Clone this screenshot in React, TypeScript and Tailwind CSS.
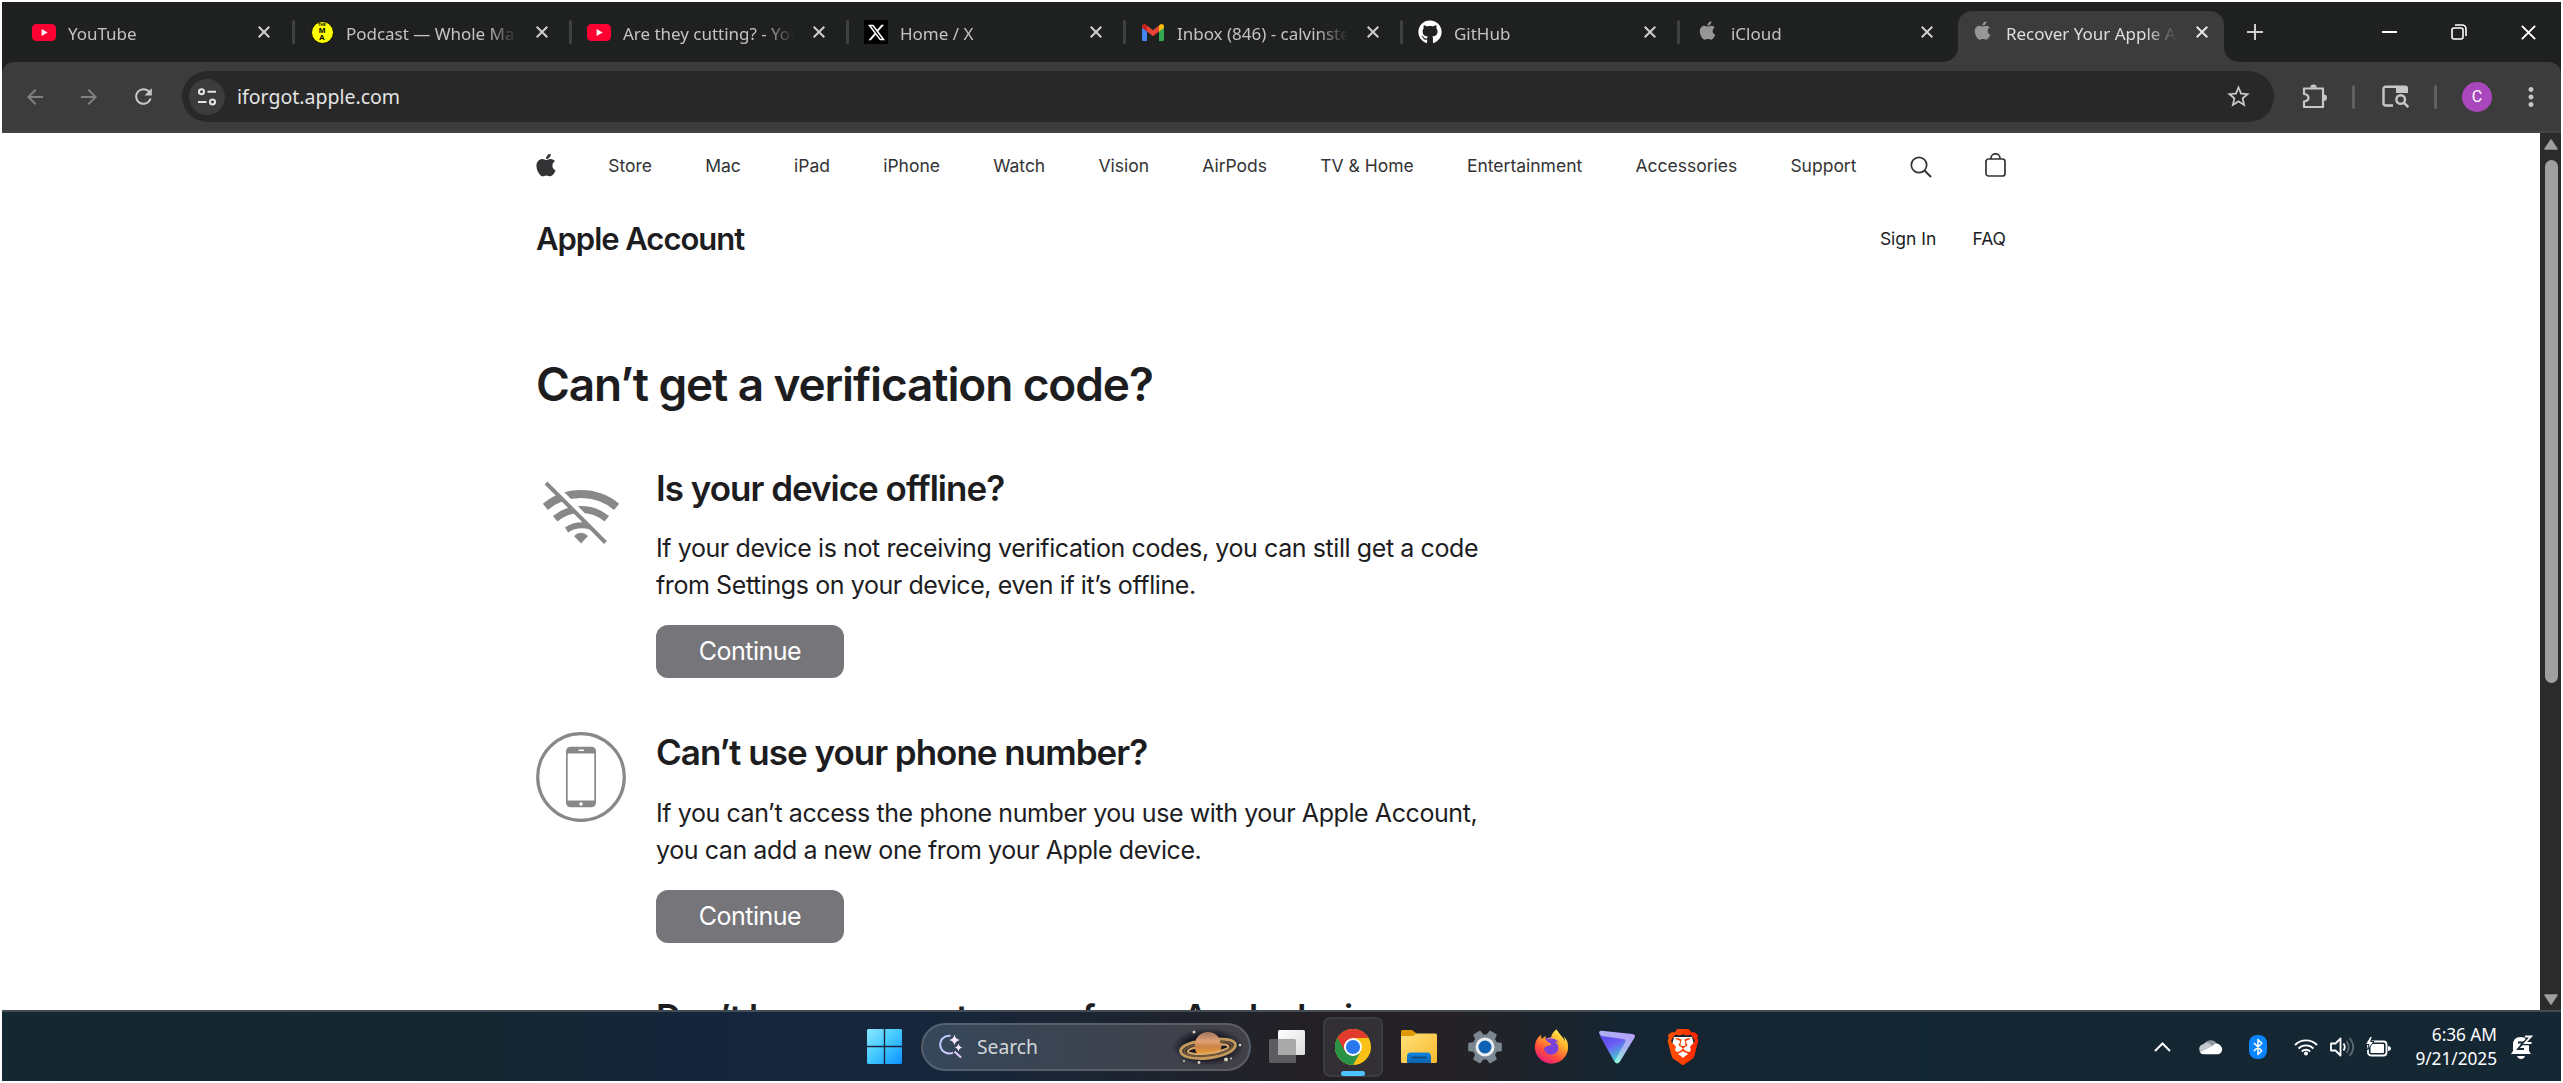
import type { ReactNode } from "react";
import { FaApple, FaFirefoxBrowser, FaGithub, FaXTwitter } from "react-icons/fa6";
import { SiBrave } from "react-icons/si";
import { MdArrowBack, MdArrowForward, MdMoreVert, MdRefresh, MdSettings, MdStarOutline } from "react-icons/md";
import { Bluetooth } from "lucide-react";

function YouTubeIcon() {
  return (
    <svg width="24" height="17" viewBox="0 0 24 17">
      <rect width="24" height="17" rx="4.5" fill="#ff0033" />
      <path d="M9.6 5.1v6.8l6-3.4z" fill="#fff" />
    </svg>
  );
}

function PodcastIcon() {
  return (
    <span className="flex size-[23px] flex-col items-center justify-center rounded-full border border-black bg-[#ffff00] font-['Liberation_Sans'] font-bold leading-none text-black">
      <span className="text-[4px] leading-[4px]">THE</span>
      <span className="text-[8px] leading-[7px]">M</span>
      <span className="text-[8px] leading-[8px]">A</span>
    </span>
  );
}

function GmailIcon() {
  return (
    <svg width="22" height="17" viewBox="0 0 22 17">
      <path d="M0 2.5V15.500Q0 17 1.500 17H5V6.500L0 2.500z" fill="#4285f4" />
      <path d="M22 2.500V15.500Q22 17 20.500 17H17V6.500L22 2.500z" fill="#34a853" />
      <path d="M5 1.500L11 6.200 17 1.500V7.500L11 12.200 5 7.500z" fill="#ea4335" />
      <path d="M0 2.500C0 .3 2.400-.8 4.200.800L5 1.500V7.500L0 3.700z" fill="#c5221f" />
      <path d="M22 2.500C22 .3 19.600-.8 17.800.800L17 1.500V7.500L22 3.700z" fill="#fbbc04" />
    </svg>
  );
}

const tabs: { title: string; icon: ReactNode; active?: boolean }[] = [
  { title: "YouTube", icon: <YouTubeIcon /> },
  { title: "Podcast — Whole Mars", icon: <PodcastIcon /> },
  { title: "Are they cutting? - YouTube", icon: <YouTubeIcon /> },
  { title: "Home / X", icon: <span className="flex size-6 items-center justify-center bg-black text-white"><FaXTwitter size={19} /></span> },
  { title: "Inbox (846) - calvinstewart", icon: <GmailIcon /> },
  { title: "GitHub", icon: <FaGithub size={24} className="text-white" /> },
  { title: "iCloud", icon: <FaApple size={21} className="-mt-1 text-[#969696]" /> },
  { title: "Recover Your Apple Account", icon: <FaApple size={21} className="-mt-1 text-[#969696]" />, active: true },
];

function Cross({ size, color, width }: { size: number; color: string; width: number }) {
  return (
    <svg width={size} height={size} viewBox="0 0 12 12" stroke={color} strokeWidth={width} fill="none">
      <path d="M.7.7l10.600 10.600M11.300.7L.7 11.300" />
    </svg>
  );
}

function TabStrip() {
  return (
    <div className="flex h-[60px] items-center bg-[#1f2120] pl-[14px] font-['Noto_Sans',sans-serif]">
      {tabs.map((tab, i) => (
        <div key={tab.title} className={"relative flex h-[60px] shrink-0 items-center pl-4 " + (i === 0 ? "w-[278px]" : i === 6 ? "w-[275px]" : "w-[277px]")}>
          {tab.active && (
            <>
              <div className="absolute bottom-0 left-[4px] right-[7px] top-[9px] rounded-t-[14px] bg-[#3c3c3c]" />
              <div className="absolute bottom-0 left-[-11px] size-[15px] bg-[#3c3c3c]"><div className="size-full rounded-br-[15px] bg-[#1f2120]" /></div>
              <div className="absolute bottom-0 right-[-8px] size-[15px] bg-[#3c3c3c]"><div className="size-full rounded-bl-[15px] bg-[#1f2120]" /></div>
            </>
          )}
          <span className="relative flex w-6 items-center justify-center">{tab.icon}</span>
          <span
            className={
              "relative ml-3 w-[171px] overflow-hidden whitespace-nowrap pt-[3px] text-[17px] tracking-[-0.02px] [mask-image:linear-gradient(to_right,black_82%,transparent_100%)] " +
              (tab.active ? "text-[#dedede]" : "text-[#c3c3c3]")
            }
          >
            {tab.title}
          </span>
          <span className="relative ml-[19px]"><Cross size={12} color={tab.active ? "#e8e8e8" : "#cfcfcf"} width={2} /></span>
          {i < 6 && <span className="absolute right-[-1px] top-[18px] h-6 w-[3px] rounded bg-[#404141]" />}
        </div>
      ))}
      <svg className="ml-[16px]" width="16" height="16" viewBox="0 0 16 16" stroke="#cfcfcf" strokeWidth="2"><path d="M8 0v16M0 8h16" /></svg>
      <div className="ml-auto flex items-center gap-[54px] pr-[25px] text-white">
        <svg width="15" height="2"><rect width="15" height="2" fill="#fff" /></svg>
        <svg width="16" height="16" viewBox="0 0 16 16" fill="none" stroke="#fff" strokeWidth="1.600">
          <rect x="1" y="4" width="11" height="11" rx="2" />
          <path d="M4 1h7a4 4 0 0 1 4 4v7" />
        </svg>
        <Cross size={15} color="#fff" width={1.5} />
      </div>
    </div>
  );
}

function Toolbar() {
  return (
    <div className="bg-[#1f2120]">
      <div className="flex h-[71px] items-center rounded-t-[12px] border-b-2 border-[#464346] bg-[#3c3c3c] pl-[21px] text-[#c7c7c7]">
        <MdArrowBack size={24} className="text-[#808080]" />
        <MdArrowForward size={24} className="ml-[30px] text-[#808080]" />
        <MdRefresh size={25} className="ml-[30px]" />
        <div className="ml-[26px] flex h-[51px] w-[2092px] items-center rounded-full bg-[#282828] pl-[7px] pr-[22px]">
          <span className="flex size-9 items-center justify-center rounded-full bg-[#3c3c3c]">
            <svg width="18" height="18" viewBox="0 0 18 18" fill="none" stroke="#e3e3e3" strokeWidth="2.100">
              <circle cx="3.500" cy="3.800" r="2.500" /><path d="M9.500 3.800H18M0 14h8.500" /><circle cx="14.500" cy="14" r="2.500" />
            </svg>
          </span>
          <span className="ml-[12px] font-['Noto_Sans',sans-serif] text-[19.500px] text-[#e3e3e3]">iforgot.apple.com</span>
          <MdStarOutline size={27} className="ml-auto" />
        </div>
        <svg className="ml-[28px]" width="26" height="25" viewBox="0 0 26 25" fill="none" stroke="#c7c7c7" strokeWidth="2.200" strokeLinejoin="round">
          <path d="M2 4.500h19v18.500H2v-5.500c3.400-.3 4.500-1.700 4.500-3.700S5.400 10.400 2 10z" />
          <path d="M8.300 3.800a3.200 3.300 0 0 1 6.400 0zM21.800 10.500a3.200 3.200 0 0 1 0 6.400z" fill="#c7c7c7" stroke="none" />
        </svg>
        <span className="ml-[24px] h-6 w-[3px] rounded bg-[#5f5f5f]" />
        <svg className="ml-[27px]" width="27" height="23" viewBox="0 0 27 23" fill="none" stroke="#c7c7c7" strokeWidth="2.400">
          <path d="M11 20.500H3.500a2 2 0 0 1-2-2V3.700a2 2 0 0 1 2-2H15" />
          <path d="M14 .5h9.500A2.500 2.500 0 0 1 26 3v5H14z" fill="#c7c7c7" stroke="none" />
          <circle cx="18.700" cy="14.500" r="4.300" /><path d="M21.800 17.600l4.500 4.500" />
        </svg>
        <span className="ml-[25px] h-6 w-[3px] rounded bg-[#5f5f5f]" />
        <span className="ml-[25px] flex size-[30px] items-center justify-center rounded-full bg-[#ab47bc] font-['Roboto'] text-[16px] text-white">C</span>
        <MdMoreVert size={30} className="ml-6" />
      </div>
    </div>
  );
}

const navItems = ["Store", "Mac", "iPad", "iPhone", "Watch", "Vision", "AirPods", "TV & Home", "Entertainment", "Accessories", "Support"];

function SiteNav() {
  return (
    <nav className="flex h-[67px] w-[1470px] items-center justify-between text-[17.500px] text-[#333336]">
      <FaApple size={26} className="-mx-[3.500px] -mt-1" />
      {navItems.map((item) => <a key={item}>{item}</a>)}
      <svg width="22" height="22" viewBox="0 0 22 22" fill="none" stroke="#333336" strokeWidth="1.700">
        <circle cx="9" cy="9" r="7.700" /><path d="M14.500 14.500l6.500 6.500" strokeWidth="2" />
      </svg>
      <svg className="-mt-1" width="21" height="24" viewBox="0 0 21 24" fill="none" stroke="#333336" strokeWidth="1.700">
        <rect x="1" y="6" width="19" height="17" rx="2.500" /><path d="M6 6V5a4.500 4.200 0 0 1 9 0v1" />
      </svg>
    </nav>
  );
}

function OfflineIcon() {
  return (
    <svg width="90" height="71" viewBox="536 477 90 71" fill="none" stroke="#888888">
      <path d="M545.4 506.800A56 56 0 0 1 616.600 506.800" strokeWidth="8" />
      <path d="M555.200 518.700A40.500 40.500 0 0 1 606.800 518.700" strokeWidth="7" />
      <path d="M566.500 529.900A27 27 0 0 1 597 529.900" strokeWidth="6" />
      <path d="M574 536q7-6.500 14 0l-7 7.500z" fill="#888888" stroke="none" />
      <path d="M549.500 482l58 59.500" stroke="#fff" strokeWidth="7" />
      <path d="M546 483l59.500 59.500" strokeWidth="4" />
    </svg>
  );
}

function PhoneIcon() {
  return (
    <svg width="90" height="90" viewBox="536 732 90 90">
      <circle cx="581" cy="777" r="43.300" fill="none" stroke="#888888" strokeWidth="3.200" />
      <rect x="566" y="746.700" width="30" height="60.600" rx="4.500" fill="#888888" />
      <rect x="567.700" y="753.500" width="26.600" height="47" fill="#fff" />
      <rect x="578.500" y="749.600" width="5.500" height="1.400" rx=".7" fill="#fff" />
      <circle cx="581" cy="804" r="1.700" fill="#fff" />
    </svg>
  );
}

function ContinueButton() {
  return <button className="mt-[22px] block h-[53px] w-[188px] rounded-[12px] bg-[#76757a] text-[25px] tracking-[-0.500px] text-white">Continue</button>;
}

function PageBody() {
  return (
    <main className="h-full flex-1 overflow-hidden bg-white pl-[534px] font-['Inter',sans-serif] text-[#1d1d1f]">
      <SiteNav />
      <div className="flex h-[78px] w-[1470px] items-center justify-between">
        <h2 className="text-[31px] font-semibold tracking-[-1.030px]">Apple Account</h2>
        <div className="flex gap-[36px] text-[17.500px]"><a>Sign In</a><a>FAQ</a></div>
      </div>
      <h1 className="mt-[78px] text-[46px] font-semibold leading-[56px] tracking-[-1.130px]">Can’t get a verification code?</h1>
      <section className="mt-[55px] flex">
        <div className="w-[120px] pt-[10px]"><OfflineIcon /></div>
        <div>
          <h3 className="text-[35px] font-semibold leading-[42px] tracking-[-1px]">Is your device offline?</h3>
          <p className="mt-[21px] whitespace-nowrap text-[25px] leading-[37px] tracking-[-0.410px]">
            If your device is not receiving verification codes, you can still get a code<br />from Settings on your device, even if it’s offline.
          </p>
          <div className="-mt-[1px]"><ContinueButton /></div>
        </div>
      </section>
      <section className="mt-[53px] flex">
        <div className="w-[120px] pt-[1px]"><PhoneIcon /></div>
        <div>
          <h3 className="text-[35px] font-semibold leading-[42px] tracking-[-1px]">Can’t use your phone number?</h3>
          <p className="mt-[22px] whitespace-nowrap text-[25px] leading-[37px] tracking-[-0.420px]">
            If you can’t access the phone number you use with your Apple Account,<br />you can add a new one from your Apple device.
          </p>
          <div className="-mt-[1px]"><ContinueButton /></div>
        </div>
      </section>
      <section className="mt-[53px] pl-[120px]">
        <h3 className="whitespace-nowrap text-[35px] font-semibold leading-[42px] tracking-[-1px]">Don’t have access to any of your Apple devices</h3>
      </section>
    </main>
  );
}

function Scrollbar() {
  return (
    <div className="flex h-full w-[21px] flex-col items-center bg-[#2b2b2b] pl-[1px] pt-[6px]">
      <svg width="14" height="11" viewBox="0 0 14 11"><path d="M7 1L13 10H1z" fill="#9f9f9f" stroke="#9f9f9f" strokeWidth="1.500" strokeLinejoin="round" /></svg>
      <div className="mt-[10px] h-[523px] w-[13px] rounded-full bg-[#9f9f9f]" />
      <svg className="mb-[5px] mt-auto" width="14" height="11" viewBox="0 0 14 11"><path d="M7 10L13 1H1z" fill="#9f9f9f" stroke="#9f9f9f" strokeWidth="1.500" strokeLinejoin="round" /></svg>
    </div>
  );
}

function StartIcon() {
  return (
    <svg width="35" height="35" viewBox="0 0 35 35">
      <defs><linearGradient id="win" x1="0" y1="0" x2="35" y2="35" gradientUnits="userSpaceOnUse"><stop stopColor="#8be4ff" /><stop offset=".45" stopColor="#48ccff" /><stop offset="1" stopColor="#0a92ff" /></linearGradient></defs>
      <path d="M1 0h15.800v16.800H0V1zM18.200 0H34l1 1v15.800H18.200zM0 18.200h16.800V35H1l-1-1zM18.200 18.200H35V34l-1 1H18.200z" fill="url(#win)" />
    </svg>
  );
}

function SearchBox() {
  return (
    <div className="flex h-12 w-[330px] items-center rounded-full border-2 border-white/15 bg-linear-to-r from-[#35475a] to-[#424047] pl-[15px] pr-[5px]">
      <svg width="25" height="25" viewBox="0 0 25 25" fill="none">
        <defs><linearGradient id="mag" x1="0" y1="0" x2="25" y2="25" gradientUnits="userSpaceOnUse"><stop stopColor="#a9ccff" /><stop offset="1" stopColor="#f3ccff" /></linearGradient></defs>
        <path d="M12.500 1.800A8.900 8.900 0 1 0 15 18.600M16.500 17.500l6.500 6" stroke="url(#mag)" strokeWidth="2" />
        <path d="M16.500.5q.9 4.600 5.200 5.400-4.300.9-5.200 5.400-.9-4.500-5.200-5.400 4.300-.8 5.200-5.400zM20.500 9.500q.7 3.300 3.900 4-3.200.7-3.900 4-.7-3.300-3.900-4 3.200-.7 3.900-4z" fill="#fbe9ff" />
      </svg>
      <span className="ml-[14px] pt-[1px] font-['Noto_Sans',sans-serif] text-[19.300px] text-[#d3d6da]">Search</span>
      <svg className="ml-auto" width="72" height="40" viewBox="0 0 72 40">
        <defs>
          <radialGradient id="sky"><stop offset=".6" stopColor="#141523" /><stop offset="1" stopColor="#141523" stopOpacity="0" /></radialGradient>
          <linearGradient id="planet" x1="0" y1="0" x2="0" y2="1"><stop stopColor="#a5755e" /><stop offset=".35" stopColor="#dfa172" /><stop offset=".55" stopColor="#c98446" /><stop offset=".8" stopColor="#ef9a35" /><stop offset="1" stopColor="#c97b3d" /></linearGradient>
        </defs>
        <ellipse cx="36" cy="20" rx="36" ry="19" fill="url(#sky)" />
        <circle cx="36" cy="18.500" r="13.500" fill="url(#planet)" />
        <g transform="rotate(-7 36 21)" fill="none">
          <path d="M24 13.500C12 15 8.500 18 8.500 21c0 5.500 12 10 27.500 10s27.500-4.500 27.500-10c0-3.500-4-6-15.500-7.500" stroke="#c39a5c" strokeWidth="3" />
          <path d="M23.500 16.500C16 17.500 12 19 12 21.500c0 3.700 10 7 24 7s24-3.300 24-7c0-2.500-4-4.200-11.500-5" stroke="#6f563a" strokeWidth="2.200" />
          <path d="M23 19c-5 .8-7.500 1.500-7.500 3 0 2.200 8 4.300 20.500 4.300s20.500-2.300 20.500-4.300c0-1.500-3-2.400-7.500-3" stroke="#d7a86a" strokeWidth="2.200" />
        </g>
        <g fill="#d9d0bd"><circle cx="22" cy="5" r="1.500" /><circle cx="68" cy="18" r="1.300" /><circle cx="12" cy="34" r="1" /><circle cx="27" cy="35.500" r="1.400" /><circle cx="54" cy="32.500" r="2" /><circle cx="59" cy="31.500" r="1" /></g>
      </svg>
    </div>
  );
}

function TaskViewIcon() {
  return (
    <svg width="36" height="36" viewBox="0 0 36 36">
      <defs><linearGradient id="tv" x1="0" y1="0" x2="1" y2="1"><stop stopColor="#fff" /><stop offset="1" stopColor="#dcdcdc" /></linearGradient></defs>
      <rect x="0" y="10" width="27" height="24" rx="1.500" fill="#5c5d60" />
      <rect x="9" y="1" width="27" height="25" rx="1.500" fill="url(#tv)" />
      <path d="M9 10h16.500a1.500 1.500 0 0 1 1.500 1.500V26H10.500A1.500 1.500 0 0 1 9 24.500z" fill="#a9a9a9" />
    </svg>
  );
}

function ChromeIcon() {
  return (
    <svg width="36" height="36" viewBox="0 0 36 36">
      <circle cx="18" cy="18" r="18" fill="#fbc116" />
      <path d="M18 18L2.400 9A18 18 0 0 0 18 36l7.800-13.500z" fill="#2a9446" />
      <path d="M18 9h15.600A18 18 0 0 0 2.400 9l7.800 13.500L18 18z" fill="#e33b2e" />
      <circle cx="18" cy="18" r="9" fill="#fff" /><circle cx="18" cy="18" r="7.100" fill="#2a78ec" />
    </svg>
  );
}

function FolderIcon() {
  return (
    <svg width="36" height="33" viewBox="0 0 36 33">
      <defs>
        <linearGradient id="fold" x1="0" y1="0" x2="1" y2="1"><stop stopColor="#ffe07a" /><stop offset="1" stopColor="#f9b92b" /></linearGradient>
        <linearGradient id="pocket" x1="0" y1="0" x2="0" y2="1"><stop stopColor="#0f86dc" /><stop offset="1" stopColor="#0b63b0" /></linearGradient>
      </defs>
      <path d="M0 1.500Q0 0 1.500 0H11l4.500 3.500V8H0z" fill="#dd9a06" />
      <path d="M0 6h11q2 0 4-2.500h19.500Q36 3.500 36 5v26.500q0 1.500-1.500 1.500h-33Q0 33 0 31.500z" fill="url(#fold)" />
      <path d="M6 33v-6.500q0-4 4-4h16q4 0 4 4V33z" fill="url(#pocket)" />
      <path d="M10.500 27.500h15" stroke="#084a83" strokeWidth="1.800" />
    </svg>
  );
}

function SettingsIcon() {
  return (
    <span className="relative flex size-9 items-center justify-center">
      <MdSettings size={42} className="absolute -left-[3px] -top-[3px] rotate-30 text-[#7b8791]" />
      <svg className="relative" width="22" height="22" viewBox="0 0 22 22"><circle cx="11" cy="11" r="9.500" fill="#e9edf0" /><circle cx="11" cy="11" r="6.500" fill="#0d62b3" /></svg>
    </span>
  );
}

function FirefoxIcon() {
  return (
    <span className="relative flex size-9 items-center justify-center">
      <svg className="absolute left-0 top-0" width="36" height="36" viewBox="0 0 36 36">
        <defs><linearGradient id="fx" x1="400" y1="30" x2="120" y2="500" gradientUnits="userSpaceOnUse"><stop stopColor="#fff04a" /><stop offset=".35" stopColor="#ffa72c" /><stop offset=".7" stopColor="#ff4a3d" /><stop offset="1" stopColor="#e31587" /></linearGradient></defs>
        <circle cx="18" cy="18" r="10" fill="#7b41db" />
      </svg>
      <FaFirefoxBrowser size={35} fill="url(#fx)" className="relative" />
    </span>
  );
}

function VpnIcon() {
  return (
    <svg width="36" height="34" viewBox="0 0 36 34">
      <defs>
        <linearGradient id="vpnA" x1="0" y1="0" x2="18" y2="34" gradientUnits="userSpaceOnUse"><stop stopColor="#5b44e0" /><stop offset=".5" stopColor="#6a5cf5" /><stop offset="1" stopColor="#3fe6c8" /></linearGradient>
        <linearGradient id="vpnB" x1="30" y1="2" x2="16" y2="34" gradientUnits="userSpaceOnUse"><stop stopColor="#b9a0ff" /><stop offset=".5" stopColor="#a9b6ee" /><stop offset="1" stopColor="#8dfbdc" /></linearGradient>
      </defs>
      <path d="M.2 3.200Q-.3.6 2.400.8L33.500 4q3.800.6 1.800 4L21 31.500q-3 4-5.500 0z" fill="url(#vpnB)" />
      <path d="M.2 3.200Q.5 5.500 3 6l21.500 3q3.200.6 1.500 3.500L15.500 31.500 1 6z" fill="url(#vpnA)" />
    </svg>
  );
}

function BraveIcon() {
  return (
    <span className="relative flex size-9 items-center justify-center">
      <svg className="absolute left-0 top-0" width="36" height="36" viewBox="0 0 36 36">
        <defs><linearGradient id="brave" x1="0" y1="0" x2="24" y2="0" gradientUnits="userSpaceOnUse"><stop stopColor="#ff5601" /><stop offset=".5" stopColor="#ff4000" /><stop offset="1" stopColor="#ff1f01" /></linearGradient></defs>
        <path d="M9 8h18l2 8-4 11-7 5-7-5-4-11z" fill="#fff" />
      </svg>
      <SiBrave size={36} fill="url(#brave)" className="relative" />
    </span>
  );
}

function AppSlot({ children }: { children: ReactNode }) {
  return <div className="flex w-[66px] items-center justify-center">{children}</div>;
}

function Tray() {
  return (
    <div className="ml-auto flex items-center pr-[28px]">
      <svg width="17" height="10" viewBox="0 0 17 10" fill="none" stroke="#fff" strokeWidth="2"><path d="M1 9l7.500-7.500L16 9" /></svg>
      <svg className="ml-[27px]" width="25" height="17" viewBox="0 0 25 17">
        <path d="M6 7a7 6.500 0 0 1 13-1l-6 5z" fill="#8f989f" />
        <path d="M5.500 16A5 5 0 0 1 5 6.200Q9 3 13.500 7L22 15 19 16z" fill="#c3c8cc" />
        <path d="M2 14.500L14.500 8q4-4.500 8-.5 3.500 4.500-.5 8-1 .8-2.500.8H5.500Q3 16.200 2 14.500z" fill="#fff" />
      </svg>
      <span className="ml-[26px] flex h-6 w-[18px] items-center justify-center rounded-[8px] bg-[#0a84ff] text-white"><Bluetooth size={18} strokeWidth={2} /></span>
      <svg className="ml-[27px]" width="24" height="18" viewBox="0 0 24 18" fill="none" stroke="#fff" strokeWidth="1.900">
        <path d="M1 7a15.500 15.500 0 0 1 22 0M4.500 10.500a10.500 10.500 0 0 1 15 0M7.800 13.500a6 6 0 0 1 8.400 0" /><circle cx="12" cy="15.500" r="2" fill="#fff" stroke="none" />
      </svg>
      <svg className="ml-[12px]" width="25" height="20" viewBox="0 0 25 20" fill="none" stroke="#fff" strokeWidth="1.800">
        <path d="M1 6.500h4.500l5-5v17l-5-5H1z" strokeLinejoin="round" /><path d="M13.500 6.500q2.500 3.500 0 7" />
        <path d="M16.500 4q4.500 6 0 12M19.500 1q7.500 9 0 18" stroke="#5b6973" />
      </svg>
      <svg className="ml-[11px]" width="25" height="20" viewBox="0 0 25 20" fill="none">
        <rect x="2" y="4.500" width="18.500" height="14" rx="3" stroke="#fff" strokeWidth="1.800" /><rect x="4.500" y="7" width="13.500" height="9" rx="1" fill="#fff" /><path d="M22 9v5q3-.5 3-2.500T22 9z" fill="#fff" />
        <path d="M4-.5L-.5 7.500H3L1.500 13 8 4.500H4.500L6.500-.5z" fill="#fff" stroke="#152733" strokeWidth="1" />
      </svg>
      <div className="ml-[24px] w-[82px] whitespace-nowrap text-right font-['Noto_Sans',sans-serif] text-[17.300px] leading-6 tracking-[-0.050px] text-white">
        <div>6:36 AM</div>
        <div>9/21/2025</div>
      </div>
      <svg className="ml-[14px]" width="22" height="24" viewBox="0 0 22 24">
        <path d="M2 16V10Q2 2 9.500 2 18 2 18 10v6l2 3H0z" fill="#fff" /><path d="M6 21h8q-1 3-4 3t-4-3z" fill="#fff" />
        <path d="M7 7.500h5.500L7 14h6" fill="none" stroke="#152733" strokeWidth="1.800" />
        <path d="M14 1.500h6l-6 6.500h6.500" fill="none" stroke="#152733" strokeWidth="4.500" /><path d="M14 1.500h6l-6 6.500h6.500" fill="none" stroke="#fff" strokeWidth="1.800" />
      </svg>
    </div>
  );
}

function Taskbar() {
  return (
    <footer className="flex h-[71px] items-center border-t-2 border-[#434c55] bg-[linear-gradient(to_right,#142831_0%,#152630_18%,#15263c_27%,#15263d_35%,#1d2430_44%,#242126_51%,#242226_57%,#152531_63%,#132733_75%,#152733_100%)] pl-[865px]">
      <StartIcon />
      <div className="ml-[19px]"><SearchBox /></div>
      <div className="ml-[3px] flex h-full items-center">
        <AppSlot><TaskViewIcon /></AppSlot>
        <AppSlot>
          <div className="relative flex size-[60px] items-center justify-center rounded-[7px] border-2 border-white/5 bg-white/7">
            <ChromeIcon />
            <span className="absolute bottom-[-1px] h-[5px] w-6 rounded-full bg-[#4cc2ff]" />
          </div>
        </AppSlot>
        <AppSlot><FolderIcon /></AppSlot>
        <AppSlot><SettingsIcon /></AppSlot>
        <AppSlot><FirefoxIcon /></AppSlot>
        <AppSlot><VpnIcon /></AppSlot>
        <AppSlot><BraveIcon /></AppSlot>
      </div>
      <Tray />
    </footer>
  );
}

export default function App() {
  return (
    <div className="h-[1083px] w-[2563px] overflow-hidden bg-white p-[2px]">
      <TabStrip />
      <Toolbar />
      <div className="flex h-[877px]">
        <PageBody />
        <Scrollbar />
      </div>
      <Taskbar />
    </div>
  );
}
